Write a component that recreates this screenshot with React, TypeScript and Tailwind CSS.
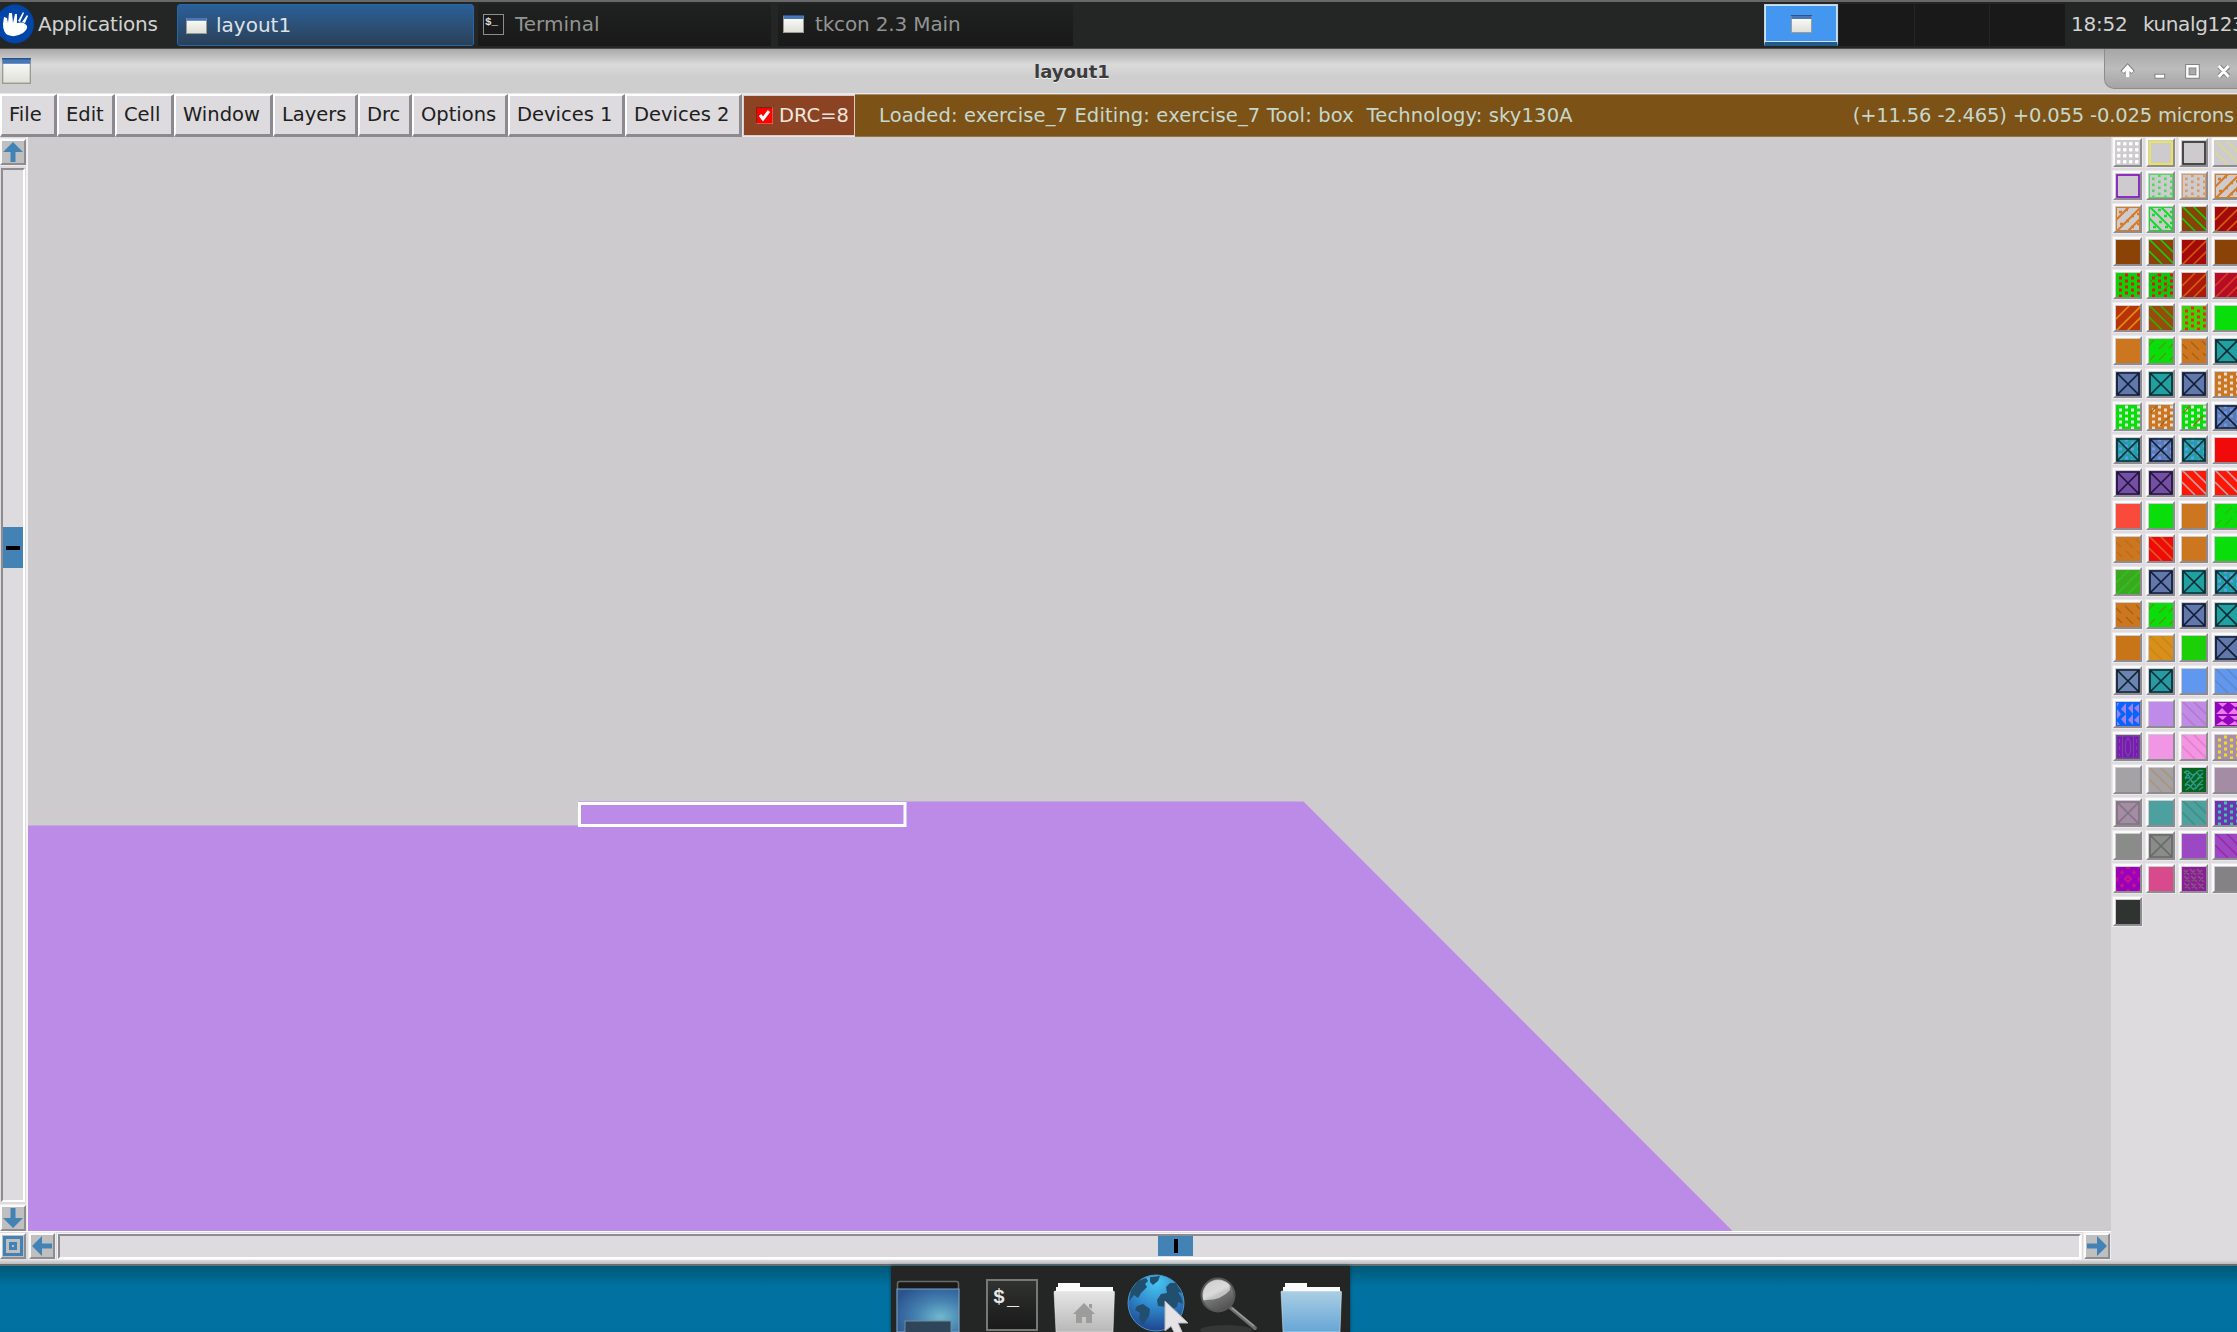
import React from "react";

type Kind =
  | "solid" | "grid" | "outline" | "back" | "fwd" | "dots" | "dotsBox" | "fwdBox" | "backBox"
  | "dashF" | "dashB" | "x" | "xDots" | "lattice" | "latticeMark" | "dotsMark" | "tri" | "triUp" | "ring" | "rings" | "weave" | "brick";
type Cell = [string, Kind?, string?];

const G = "#0ade0a";
const O = "#cc7720";
const T = "#20a0a0";
const B = "#6278aa";
const BG = "#cdcbce";
const BR = "#8b4206";

const CELLS: Cell[] = [
  [BG, "grid", "#fff"], [BG, "outline", "#eee840"], [BG, "outline", "#333"], [BG, "back", "#dcd88c"],
  [BG, "outline", "#8114bd"], [BG, "dotsBox", "#4ddc5a"], [BG, "dotsBox", "#d89a62"], [BG, "fwdBox", "#d67a24"],
  [BG, "fwdBox", "#d67a24"], [BG, "backBox", "#14dc28"], [BR, "back", "#18cc0c"], ["#a60a08", "fwd", "#cc6210"],
  [BR], [BR, "back", "#18cc0c"], ["#a60a08", "fwd", "#c85a10"], [BR],
  ["#08d408", "dots", "#e81410"], ["#08cc08", "dotsMark", "#e81410"], ["#ae1808", "fwd", "#cc6010"], ["#b80c26", "fwd", "#d04020"],
  ["#b83408", "fwd", "#e08c10"], ["#964c0a", "back", "#3ca80c"], ["#3cd408", "dots", "#f02a10"], [G],
  [O], [G, "dashF", "#5c9410"], [O, "dashB", "#a4600e"], [T, "x", "#0c2c34"],
  [B, "x", "#101c38"], [T, "x", "#0c2c34"], [B, "x", "#101c38"], [O, "lattice", "#e4dcd4"],
  [G, "lattice", "#dcecdc"], [O, "latticeMark", "#e4dcd4"], [G, "latticeMark", "#dcecdc"], [B, "xDots", "#101c38"],
  [T, "xDots", "#0c2c34"], [B, "xDots", "#101c38"], [T, "xDots", "#0c2c34"], ["#f00a0a"],
  ["#7450a4", "x", "#24143c"], ["#7450a4", "x", "#24143c"], ["#ff1604", "back", "#c0a0a0"], ["#ff1604", "back", "#c0a0a0"],
  ["#fa4a3c"], [G], [O], [G, "dashF", "#34b414"],
  [O, "dashB", "#bc6a1c"], ["#f00a0a", "back", "#dc5c1c"], [O], [G],
  ["#3ca822", "fwd", "#2cc41c"], [B, "x", "#101c38"], [T, "x", "#0c2c34"], [T, "xDots", "#0c2c34"],
  [O, "dashB", "#a4600e"], [G, "dashF", "#5c9410"], [B, "x", "#101c38"], [T, "x", "#0c2c34"],
  ["#c87418"], ["#d89018", "back", "#cc8420"], ["#1cd008"], [B, "x", "#101c38"],
  ["#6a86b0", "x", "#142030"], ["#289aa4", "x", "#0c2c34"], ["#6098f0"], ["#6098f0", "back", "#6088c8"],
  ["#0864ff", "tri", "#a080e8"], ["#be8ce8"], ["#be8ce8", "back", "#bc78c8"], ["#9404bc", "triUp", "#e87cec"],
  ["#8410c0", "rings", "#68508c"], ["#f096e4"], ["#f096e4", "back", "#ee7cc8"], ["#a88cac", "dots", "#eedc20"],
  ["#a4a2a4"], ["#a4a2a4", "back", "#ae9478"], ["#08641c", "weave", "#2c9c90"], ["#a48ca4"],
  ["#a48ca4", "x", "#807480"], ["#4ca0a0"], ["#4ca0a0", "back", "#409084"], ["#6c34b0", "dots", "#3cc4ac"],
  ["#8a8c8a"], ["#8a8c8a", "x", "#686a68"], ["#9c48c4"], ["#9c48c4", "back", "#9c2ca4"],
  ["#9800bc", "ring", "#c8148c"], ["#d84a8c"], ["#8c1c9c", "brick", "#845878"], ["#848284"],
  ["#303430"],
];

const DIAG_BACK = "M0 11L13 24M0 -1L25 24M11 -1L25 13";
const DIAG_FWD = "M0 13L13 0M0 25L25 0M11 25L25 11";

function points(step = 6) {
  const out: [number, number][] = [];
  for (let c = 0; c < 4; c++)
    for (let r = 0; r < 4; r++) out.push([3 + c * step, (c % 2 ? 0.5 : 3.5) + r * step]);
  return out;
}

function Dots({ color, size = 3 }: { color: string; size?: number }) {
  return <>{points().map(([x, y], i) => <rect key={i} x={x} y={y} width={size} height={size} fill={color} />)}</>;
}

function Motif({ kind, color, base }: { kind: Kind; color: string; base: string }) {
  const line = { stroke: color, fill: "none" };
  switch (kind) {
    case "grid":
      return <>{[1, 7, 13, 19].flatMap((x) => [1, 7, 13, 19].map((y) => <rect key={x + "-" + y} x={x} y={y} width="3.5" height="3.5" rx="1" fill={color} />))}</>;
    case "outline":
      return <rect x="1" y="1" width="22" height="22" {...line} strokeWidth="1.7" />;
    case "back":
      return <path d={DIAG_BACK} {...line} strokeWidth="1.6" />;
    case "fwd":
      return <path d={DIAG_FWD} {...line} strokeWidth="1.6" />;
    case "dots":
      return <Dots color={color} />;
    case "dotsMark":
      return <><Dots color={color} /><path d="M1 9L9 1M10 22L20 12" stroke="#a05010" /></>;
    case "dotsBox":
      return <><rect x=".5" y=".5" width="23" height="23" {...line} /><Dots color={color} size={2.6} /></>;
    case "fwdBox":
      return <><rect x=".5" y=".5" width="23" height="23" {...line} /><path d={DIAG_FWD} {...line} strokeWidth="2" /><path d="M3 5h3M9 3h3M4 17h3M10 14h3M15 9h3M21 7h2M15 20h3M21 17h2" {...line} strokeWidth="2.500" /></>;
    case "backBox":
      return <><rect x=".5" y=".5" width="23" height="23" {...line} /><path d={DIAG_BACK} {...line} strokeWidth="2" /><path d="M3 8h3M9 3h3M4 20h3M10 15h3M15 9h3M21 5h2M16 20h3M21 16h2" {...line} strokeWidth="2.500" /></>;
    case "dashF":
      return <path d="M0 6L5 1M10 10L17 3M20 9L24 5M1 21L6 16M10 21L17 14M21 21L24 18" {...line} strokeWidth="1.3" />;
    case "dashB":
      return <path d="M0 5L5 10M9 3L17 11M20 2L24 6M1 15L6 20M10 14L17 21M21 14L24 17" {...line} strokeWidth="1.3" />;
    case "x":
      return <path d="M1 1H23V23H1ZM1 1L23 23M23 1L1 23" {...line} strokeWidth="1.7" />;
    case "xDots":
      return <><Dots color="#5e9af0" /><path d="M1 1H23V23H1ZM1 1L23 23M23 1L1 23" {...line} strokeWidth="1.7" /></>;
    case "lattice":
      return <Dots color={color} />;
    case "latticeMark":
      return <><Dots color={color} /><path d="M1 8L8 1M11 21L21 11" stroke="#a0641c" strokeWidth="1.2" /></>;
    case "tri":
      return <path d="M1 1H3L1 5ZM5 7L10 1V12ZM1 7L5 12L1 17ZM10 12V23L5 17ZM1 19L4 23H1ZM12 6L17 1V12ZM17 12V23L12 18ZM23 2V11L18 6ZM23 13V22L18 18Z" fill={color} />;
    case "triUp":
      return <path d="M3 1H12L7.500 5ZM15 1H24V4L20 5ZM1 12L7 6L13 12ZM13 12L19 6L24 11V12ZM3 14H12L7.500 18ZM15 14H24V17L20 18ZM1 23L7 19L13 23ZM14 23L20 19L24 23Z" fill={color} />;
    case "rings":
      return <><path d="M.700 .700H23.300V23.300H.700Z" {...line} strokeWidth="1.4" /><path d="M6.500 1V23M17.500 1V23M12 3L14.500 7V17L12 21L9.500 17V7ZM3.500 4V8M3.500 11V15M3.500 18V21M20.500 4V8M20.500 11V15M20.500 18V21" {...line} strokeWidth="1.3" /></>;
    case "ring":
      return <><path d="M12 9L15 12L12 15L9 12Z" {...line} strokeWidth="2.200" /><path d="M6 3L8.500 5.500L6 8L3.500 5.500ZM18 3L20.500 5.500L18 8L15.500 5.500ZM6 16L8.500 18.500L6 21L3.500 18.500ZM18 16L20.500 18.500L18 21L15.500 18.500ZM0 10H2.500V14H0ZM21.500 10H24V14H21.500ZM10 0H14V2H10ZM10 22H14V24H10ZM0 0H2V2H0ZM22 0H24V2H22ZM0 22H2V24H0ZM22 22H24V24H22Z" fill={color} stroke={base} strokeWidth=".3" /></>;
    case "weave":
      return <path d="M2 5Q5 1 8 5T14 5T21 3M3 10L8 4M9 11L14 5M15 11L21 5M3 11Q7 8 9 12T15 12T21 10M3 17L8 12M9 18L14 12M15 18L21 12M3 18Q6 15 9 19T15 19T21 17M4 22L8 19M11 22L14 19M17 22L21 19M3 4L8 9M15 5L20 10M9 13L14 18" {...line} strokeWidth="1.3" />;
    case "brick":
      return <path d="M2 3L7 8M8 2L14 8M15 2L21 8M2 9L8 15M9 9L15 15M16 9L22 15M2 16L8 22M9 16L15 22M16 16L22 22M2 7L6 3M9 7L13 3M16 7L20 3M3 14L7 10M10 14L14 10M17 14L21 10M3 21L7 17M10 21L14 17M17 21L21 17" {...line} strokeWidth="1.700" />;
    default:
      return null;
  }
}

function Swatch({ cell }: { cell: Cell }) {
  const [base, kind = "solid", color = "#000"] = cell;
  return (
    <div className="size-[29px] shrink-0 border-2 border-t-[#fafafa] border-l-[#fafafa] border-r-[#8e8c90] border-b-[#8e8c90] bg-[#cdcbce] p-px shadow-[0_0_0_1px_#e9e7ea]">
      <svg viewBox="0 0 24 24" className="size-[24px]">
        <rect width="24" height="24" fill={base} />
        <Motif kind={kind} color={color} base={base} />
      </svg>
    </div>
  );
}

function MiniWindow({ className }: { className: string }) {
  return (
    <svg viewBox="0 0 22 18" preserveAspectRatio="none" className={className}>
      <defs><linearGradient id="mw" x2="0" y2="1"><stop stopColor="#fff" /><stop offset="1" stopColor="#dedfd6" /></linearGradient></defs>
      <rect x=".5" y=".5" width="21" height="17" fill="url(#mw)" stroke="#9b9b92" />
      <rect x=".5" y=".5" width="21" height="3.5" fill="#4877b8" />
      <path d="M0 .5H22" stroke="#29518c" />
    </svg>
  );
}

const MENUS: [string, string][] = [
  ["File", "w-[57px]"], ["Edit", "w-[58px]"], ["Cell", "w-[59px]"], ["Window", "w-[99px]"], ["Layers", "w-[85px]"],
  ["Drc", "w-[54px]"], ["Options", "w-[96px]"], ["Devices 1", "w-[117px]"], ["Devices 2", "w-[117px]"],
];

function ArrowButton({ rotate }: { rotate: string }) {
  return (
    <div className="size-[26px] shrink-0 border-2 border-t-[#fafafa] border-l-[#fafafa] border-r-[#8e8c90] border-b-[#8e8c90] bg-[#c0bfc0] shadow-[0_0_0_1px_#ecebed]">
      <svg viewBox="0 0 22 22" className={"size-[22px] " + rotate}><path d="M11 1L21 11H13.5V21H8.5V11H1Z" fill="#4282b4" /></svg>
    </div>
  );
}

function Folder({ id, top, bottom, home }: { id: string; top: string; bottom: string; home?: boolean }) {
  return (
    <svg viewBox="0 0 62 50" className="h-[50px] w-[62px]">
      <defs><linearGradient id={id} x2="0" y2="1"><stop stopColor={top} /><stop offset="1" stopColor={bottom} /></linearGradient></defs>
      <path d="M3 10V5H5V1H27V5H60V12H3Z" fill="#fbfbfb" />
      <path d="M1 10Q1 9 2 9H60Q62 9 61.500 11L60 50H3Z" fill={`url(#${id})`} stroke="#ffffff70" />
      {home && <path d="M31 21L42 32H39V41H33V35H29V41H23V32H20ZM36 22H39V27L36 25Z" fill="#9c9d9b" />}
    </svg>
  );
}

function Dock() {
  return (
    <div className="relative flex h-[66px] w-[459px] items-end bg-[#232624] shadow-[0_0_3px_#003b55]">
      <svg viewBox="0 0 64 52" className="ml-[5px] h-[52px] w-[64px]">
        <defs><radialGradient id="desk" cx=".7" cy=".65" r=".8"><stop stopColor="#70b8cc" /><stop offset=".5" stopColor="#4480b0" /><stop offset="1" stopColor="#2c5590" /></radialGradient></defs>
        <rect x="1.500" y="1.500" width="61" height="54" rx="2" fill="#191a19" stroke="#686b69" strokeWidth="1.500" />
        <rect x="1" y="9" width="62" height="43" fill="url(#desk)" stroke="#7aa6c8" />
        <rect x="9" y="41" width="46" height="14" fill="#2f465a" stroke="#6e8ba0" />
      </svg>
      <div className="mb-[1px] ml-[26px] h-[52px] w-[52px] border-2 border-[#777977] bg-linear-to-b from-[#303230] to-[#191a19] pt-[7px] pl-[5px] font-['Liberation_Mono'] text-[20px] leading-[20px] font-bold text-[#e8e8e8]">
        $<span className="relative top-[2px] left-[2px]">_</span>
      </div>
      <div className="ml-[15px]"><Folder id="fh" top="#e6e6e6" bottom="#b8b8b8" home /></div>
      <svg viewBox="0 0 60 60" className="mb-[-1px] ml-[11px] size-[60px]">
        <defs><radialGradient id="globe" cx=".5" cy=".12" r=".9"><stop stopColor="#48c8f0" /><stop offset=".5" stopColor="#3088cc" /><stop offset="1" stopColor="#1c438c" /></radialGradient></defs>
        <circle cx="30" cy="30" r="28" fill="url(#globe)" stroke="#4b94c8" />
        <path d="M5 17L12 8L20 5L22 8L19 11L21 14L15 20L12 25L8 22L3 28ZM24 4L34 3L32 8L27 12L24 9ZM11 33L17 31L24 36L23 43L17 52L13 46L14 40L9 37ZM40 14L44 10L50 10L56 20L52 19L55 24L57 31L52 29L51 34L46 36L41 34L32 33L31 27L35 21L41 20Z" fill="#204f70" />
      </svg>
      <svg viewBox="0 0 64 56" className="ml-[9px] h-[56px] w-[64px]">
        <defs><linearGradient id="lens" x2=".5" y2="1"><stop stopColor="#969796" /><stop offset=".5" stopColor="#d0d0d0" /><stop offset=".6" stopColor="#777" /><stop offset="1" stopColor="#555" /></linearGradient></defs>
        <ellipse cx="31" cy="54" rx="26" ry="5" fill="#353736" />
        <path d="M36 32L60 52" stroke="#6c6d6c" strokeWidth="4" strokeLinecap="round" />
        <path d="M37 32L59 50" stroke="#a0a1a0" strokeWidth="1.200" />
        <circle cx="23" cy="19" r="16.500" fill="url(#lens)" stroke="#555755" strokeWidth="2" />
        <path d="M8 20Q9 6 22 4Q35 5 35 14Q26 25 8 24Z" fill="#dededd" opacity=".75" />
      </svg>
      <div className="ml-[21px]"><Folder id="fb" top="#aaceE4" bottom="#66a6d6" /></div>
      <svg viewBox="0 0 25 34" className="absolute top-[34px] left-[273px] h-[34px] w-[25px]">
        <path d="M1 1L24 23L14 23L19 34H11L7 26L1 31Z" fill="#e5e3e5" stroke="#b8b6ba" />
      </svg>
    </div>
  );
}

export default function App() {
  return (
    <div className="flex h-[1332px] w-[2237px] flex-col overflow-hidden bg-[#0071a0] font-['DejaVu_Sans',sans-serif] text-[20px] leading-none whitespace-pre">
      <header className="flex h-[49px] shrink-0 items-center border-t-2 border-b border-t-[#686868] border-b-[#4b4b4b] bg-[#232624] text-[#d2d2d2]">
        <div className="flex h-full w-[177px] items-center pb-[2px]">
          <svg viewBox="0 0 34 40" className="h-[40px] w-[34px]">
            <ellipse cx="15" cy="20" rx="19" ry="19.500" fill="#0045aa" />
            <path d="M3 20L4 13L7 14L8 19L9 9L12 9L13 19L15 10L17 10L17 19Q24 17 27 22Q28 25 23 29Q15 34 8 31Q3 29 3 20ZM18 17L23 8L24 9L20 18ZM22 18L27 11L28 12L25 19Z" fill="white" />
          </svg>
          <span className="ml-[4px] tracking-[-0.2px]">Applications</span>
        </div>
        <div className="flex h-[42px] w-[297px] items-center rounded-[3px] border border-[#2368a8] bg-linear-to-b from-[#2a6098] to-[#2b4058] pb-[2px] pl-[8px] text-[#dde3e8]">
          <MiniWindow className="mt-[3px] h-[17px] w-[21px]" /><span className="mt-[2px] ml-[9px]">layout1</span>
        </div>
        <div className="ml-[4px] flex h-[42px] w-[293px] items-center bg-linear-to-b from-[#202221] to-[#181918] pb-[2px] pl-[5px] text-[#929492]">
          <div className="h-[21px] w-[21px] border border-[#8c8e8c] bg-[#181918] pt-[2px] pl-[1px] font-['Liberation_Mono'] text-[11px] font-bold text-[#ddd]">$_</div>
          <span className="ml-[11px]">Terminal</span>
        </div>
        <div className="ml-[7px] flex h-[42px] w-[295px] items-center bg-linear-to-b from-[#202221] to-[#181918] pb-[2px] pl-[5px] text-[#929492]">
          <MiniWindow className="h-[18px] w-[21px]" /><span className="ml-[11px] tracking-[-0.15px]">tkcon 2.3 Main</span>
        </div>
        <div className="ml-auto flex h-[42px] gap-px">
          <div className="flex w-[74px] items-center justify-center border-x border-t border-b-4 border-x-[#b8d4ec] border-t-[#b8d4ec] border-b-[#235c88] bg-[#4497f0] shadow-[inset_0_0_0_1px_#d0dff0]">
            <MiniWindow className="h-[18px] w-[21px]" />
          </div>
          <div className="w-[75px] bg-[#181918]" /><div className="w-[74px] bg-[#181918]" /><div className="w-[75px] bg-[#181918]" />
        </div>
        <span className="ml-[6px] w-[72px] pb-[2px] tracking-[-0.2px]">18:52</span>
        <span className="w-[94px] pb-[2px] tracking-[-0.4px]">kunalg123</span>
      </header>

      <div className="flex h-[45px] shrink-0 items-center border-b border-[#e8e7e9] bg-linear-to-b from-[#a9a9a9] via-[#dadada] via-35% to-[#cecece] to-65%">
        <MiniWindow className="mt-[-1px] ml-[2px] h-[26px] w-[29px]" />
        <span className="mt-[2px] ml-[1003px] text-[18px] font-bold text-[#3c3c3c] [text-shadow:0_1px_#f2f2f2]">layout1</span>
        <div className="ml-auto h-[40px] w-[133px] self-start rounded-bl-[10px] border-b border-l border-[#8d8d8d] bg-linear-to-b from-[#a6a6a6] via-[#bcbcbc] to-[#a4a4a4]">
          <svg viewBox="0 0 133 40" className="h-[39px] w-[133px]">
            <g fill="none" stroke="#828282" strokeWidth="5"><path d="M21.500 29V20M16 24L21.500 18L27 24M49 28H60M83 18H93V28H83ZM115.500 18L125 28M125 18L115.500 28" /></g>
            <path d="M21.500 16L27.500 22.500L25.500 24.500L23.500 22.500V29H19.500V22.500L17.500 24.500L15.500 22.500ZM50 26.500H59V29.500H50Z" fill="#fff" />
            <path d="M83 18H93V28H83ZM115 17.500L125 28.500M125 17.500L115 28.500" fill="none" stroke="#fff" strokeWidth="3" />
            <rect x="84.500" y="19.500" width="7" height="7" fill="#aaa" stroke="#858585" />
          </svg>
        </div>
      </div>

      <nav className="flex h-[43px] shrink-0 bg-[#e8e6e9] text-[#202020]">
        {MENUS.map(([label, width]) => (
          <div key={label} className={"flex h-full items-center border-t-2 border-r-3 border-b-3 border-l-2 border-t-white border-r-[#8c8a8e] border-b-[#8c8a8e] border-l-white bg-[#dddbde] pl-[7px] text-[19.5px] " + width}>{label}</div>
        ))}
        <div className="my-px ml-[1px] flex w-[112px] items-center border border-[#d8cfcd] bg-[#8b4324] pl-[12px] text-[19.5px] text-[#efe5df]">
          <svg viewBox="0 0 17 17" className="mr-[6px] size-[17px] shrink-0"><rect width="17" height="17" fill="#f00" /><path d="M0 17V0H17" fill="none" stroke="#702818" strokeWidth="2" /><path d="M17 0V17H0" fill="none" stroke="#d0a090" /><path d="M4 8L7 12L13 4" fill="none" stroke="white" strokeWidth="3" /></svg>
          DRC=8
        </div>
        <div className="flex flex-1 items-center justify-between border-y border-t-[#a88f66] border-b-[#94744a] bg-[#7c5217] pr-[3px] pl-[24px] text-[19.5px] text-[#c6d8cc]">
          <span className="tracking-[0.14px]">Loaded: exercise_7 Editing: exercise_7 Tool: box  Technology: sky130A</span>
          <span className="tracking-[-0.16px]">(+11.56 -2.465) +0.055 -0.025 microns</span>
        </div>
      </nav>

      <main className="flex h-[1123px] shrink-0 bg-[#dddbde]">
        <div className="flex w-[2111px] flex-col">
          <div className="flex h-[1094px]">
            <div className="flex w-[28px] flex-col items-start gap-[3px] border-r-2 border-[#f3f2f4] pt-[2px]">
              <ArrowButton rotate="rotate-0" />
              <div className="ml-px flex w-[24px] flex-1 flex-col border-2 border-t-[#8e8c90] border-r-white border-b-white border-l-[#8e8c90] pt-[357px]">
                <div className="flex h-[41px] w-[20px] items-center justify-center bg-[#4282b4]"><div className="h-[4px] w-[14px] bg-black" /></div>
              </div>
              <ArrowButton rotate="rotate-180" />
            </div>
            <svg viewBox="28 137 2083 1094" className="h-[1094px] w-[2083px] bg-[#cdcbce]">
              <path d="M28 825.500H579V801.500H1303.500L1732.500 1231H28Z" fill="#bc8ae7" />
              <rect x="579.500" y="803.500" width="325.500" height="22" fill="#bc8ae7" stroke="#fff" strokeWidth="3" />
            </svg>
          </div>
          <div className="flex h-[29px] items-center gap-[3px] border-t border-white">
            <div className="flex size-[26px] items-center justify-center border-2 border-t-[#fafafa] border-l-[#fafafa] border-r-[#8e8c90] border-b-[#8e8c90] bg-[#c0bfc0]">
              <svg viewBox="0 0 20 20" className="size-[20px]"><path d="M1.500 1.500H18.500V18.500H1.500ZM7.500 7.500H12.500V12.500H7.500Z" fill="none" stroke="#4282b4" strokeWidth="3" /></svg>
            </div>
            <ArrowButton rotate="-rotate-90" />
            <div className="flex h-[25px] flex-1 border-2 border-t-[#8e8c90] border-l-[#8e8c90] border-r-white border-b-white pl-[1098px] shadow-[0_0_0_1px_#f3f2f4]">
              <div className="flex h-[20px] w-[35px] items-center justify-center bg-[#4282b4]"><div className="h-[14px] w-[4px] bg-black" /></div>
            </div>
            <div className="pr-px"><ArrowButton rotate="rotate-90" /></div>
          </div>
        </div>
        <aside className="grid w-[126px] auto-rows-[33px] grid-cols-[repeat(4,33px)] content-start overflow-hidden pt-[1px] pl-[2px]">
          {CELLS.map((cell, i) => <Swatch key={i} cell={cell} />)}
        </aside>
      </main>

      <div className="h-[6px] shrink-0 border-b-2 border-[#63706e] bg-linear-to-b from-[#dddbde] to-[#bcbcbc]" />
      <footer className="flex flex-1 justify-center bg-linear-to-b from-[#005878] via-[#0071a0] via-30% to-[#0070a1] pl-[4px]">
        <Dock />
      </footer>
    </div>
  );
}
